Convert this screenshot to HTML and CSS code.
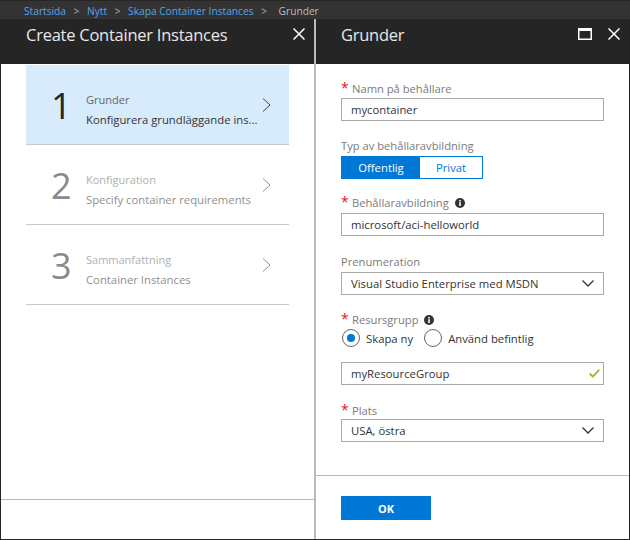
FILE: index.html
```html
<!DOCTYPE html>
<html>
<head>
    <title>Grunder</title>
    <link rel="stylesheet" href="styles.css">
</head>
<body>
    <nav class="crumbs">
        <a class="crumb-link">Startsida</a><span class="crumb-sep">&gt;</span>
        <a class="crumb-link">Nytt</a><span class="crumb-sep">&gt;</span>
        <a class="crumb-link">Skapa Container Instances</a><span class="crumb-sep">&gt;</span>
        <span class="crumb-now">Grunder</span>
    </nav>
    <div class="blades">
        <section class="blade blade-left">
            <header class="blade-head">
                <h1 class="blade-title">Create Container Instances</h1>
                <div class="head-icons">
                    <svg class="head-icon" viewBox="0 0 12 12"><path d="M0.5 0.5L11.5 11.5M11.5 0.5L0.5 11.5"/></svg>
                </div>
            </header>
            <div class="steps">
                <div class="step step-active">
                    <div class="step-num">1</div>
                    <div class="step-text">
                        <div class="step-name">Grunder</div>
                        <div class="step-desc">Konfigurera grundläggande ins...</div>
                    </div>
                    <svg class="step-arrow" viewBox="0 0 9 14"><path d="M1 0.5L8 7L1 13.5"/></svg>
                </div>
                <div class="step">
                    <div class="step-num">2</div>
                    <div class="step-text">
                        <div class="step-name">Konfiguration</div>
                        <div class="step-desc">Specify container requirements</div>
                    </div>
                    <svg class="step-arrow" viewBox="0 0 9 14"><path d="M1 0.5L8 7L1 13.5"/></svg>
                </div>
                <div class="step">
                    <div class="step-num">3</div>
                    <div class="step-text">
                        <div class="step-name">Sammanfattning</div>
                        <div class="step-desc">Container Instances</div>
                    </div>
                    <svg class="step-arrow" viewBox="0 0 9 14"><path d="M1 0.5L8 7L1 13.5"/></svg>
                </div>
            </div>
            <div class="blade-foot blade-foot-left"></div>
        </section>

        <section class="blade blade-right">
            <header class="blade-head">
                <h1 class="blade-title">Grunder</h1>
                <div class="head-icons">
                    <svg class="head-icon head-max" viewBox="0 0 14 12"><path d="M0 0H14V12H0ZM1.5 3V10.5H12.5V3Z"/></svg>
                    <svg class="head-icon" viewBox="0 0 12 12"><path d="M0.5 0.5L11.5 11.5M11.5 0.5L0.5 11.5"/></svg>
                </div>
            </header>
            <form class="form">
                <div class="field field-first">
                    <div class="label"><span class="star">*</span>Namn på behållare</div>
                    <div class="box">mycontainer</div>
                </div>
                <div class="field field-type">
                    <div class="label label-plain">Typ av behållaravbildning</div>
                    <div class="toggle">
                        <div class="toggle-on">Offentlig</div>
                        <div class="toggle-off">Privat</div>
                    </div>
                </div>
                <div class="field field-image">
                    <div class="label"><span class="star">*</span>Behållaravbildning
                        <svg class="info" viewBox="0 0 10 10"><circle cx="5" cy="5" r="5"/><rect class="info-mark" x="4.2" y="4.2" width="1.6" height="3.8"/><rect class="info-mark" x="4.2" y="2" width="1.6" height="1.5"/></svg>
                    </div>
                    <div class="box">microsoft/aci-helloworld</div>
                </div>
                <div class="field field-sub">
                    <div class="label label-plain">Prenumeration</div>
                    <div class="box box-select">Visual Studio Enterprise med MSDN
                        <svg class="drop" viewBox="0 0 12 7"><path d="M0.5 0.5L6 6L11.5 0.5"/></svg>
                    </div>
                </div>
                <div class="field field-group">
                    <div class="label"><span class="star">*</span>Resursgrupp
                        <svg class="info" viewBox="0 0 10 10"><circle cx="5" cy="5" r="5"/><rect class="info-mark" x="4.2" y="4.2" width="1.6" height="3.8"/><rect class="info-mark" x="4.2" y="2" width="1.6" height="1.5"/></svg>
                    </div>
                    <div class="radios">
                        <span class="radio radio-on"></span><span class="radio-text">Skapa ny</span>
                        <span class="radio"></span><span class="radio-text">Använd befintlig</span>
                    </div>
                    <div class="box box-group">myResourceGroup
                        <svg class="check" viewBox="0 0 11 9"><path d="M0.7 4.6L3.8 7.6L10.3 0.8"/></svg>
                    </div>
                </div>
                <div class="field field-place">
                    <div class="label"><span class="star">*</span>Plats</div>
                    <div class="box box-select">USA, östra
                        <svg class="drop" viewBox="0 0 12 7"><path d="M0.5 0.5L6 6L11.5 0.5"/></svg>
                    </div>
                </div>
            </form>
            <div class="blade-foot blade-foot-right">
                <button class="ok" type="button">OK</button>
            </div>
        </section>
    </div>
</body>
</html>
```

FILE: styles.css
```css
html, body {
    margin: 0;
    padding: 0;
}
body {
    width: 630px;
    height: 540px;
    overflow: hidden;
    background-color: #252525;
    font-family: "Open Sans", "Noto Sans", sans-serif;
    font-size: 12px;
    display: flex;
    flex-direction: column;
}
.crumbs {
    height: 19px;
    box-sizing: border-box;
    border-top: 1px solid #262626;
    padding-top: 1px;
    background-color: #333;
    display: flex;
    align-items: center;
    padding-left: 24px;
    font-size: 10.2px;
    white-space: nowrap;
}
.crumb-link {
    color: #4fa6ee;
}
.crumb-now {
    color: #bdbdbd;
    margin-left: 4px;
}
.crumb-sep {
    color: #b5b5b5;
    width: 21px;
    text-align: center;
}
.blades {
    flex: 1;
    display: flex;
    padding: 0 1px 1px 1px;
    min-height: 0;
}
.blade {
    background-color: #fff;
    display: flex;
    flex-direction: column;
}
.blade-left {
    width: 313px;
    border-right: 2px solid #bababa;
}
.blade-right {
    flex: 1;
}
.blade-head {
    height: 45px;
    background-color: #252525;
    display: flex;
    justify-content: space-between;
    padding-top: 5px;
    box-sizing: border-box;
}
.blade-left .blade-head {
    padding-left: 25px;
    padding-right: 9px;
}
.blade-right .blade-head {
    padding-left: 25px;
    padding-right: 9px;
}
.blade-title {
    margin: 0;
    font-size: 16.5px;
    letter-spacing: -0.25px;
    line-height: 22px;
    font-weight: 400;
    color: #e8e8e8;
}
.head-icons {
    display: flex;
    gap: 16px;
    padding-top: 4px;
}
.head-icon {
    width: 12px;
    height: 12px;
    fill: none;
    stroke: #fff;
    stroke-width: 1.5;
}
.head-max {
    width: 14px;
    fill: #fff;
    stroke: none;
}
.steps {
    flex: 1;
    padding: 1px 25px 0 25px;
    background-color: #fff;
}
.step {
    height: 79px;
    border-bottom: 1px solid #c8c8c8;
    display: flex;
    align-items: center;
    color: #8a8a8a;
}
.step-active {
    background-color: #d7ebfc;
    color: #252525;
}
.step-num {
    width: 60px;
    padding-left: 25px;
    padding-top: 3px;
    box-sizing: border-box;
    font-size: 36px;
    line-height: 40px;
}
.step-text {
    flex: 1;
    padding-top: 10px;
    white-space: nowrap;
    font-size: 11.3px;
    line-height: 20px;
    color: #8f8f8f;
}
.step-name {
    font-size: 11px;
    color: #b0b0b0;
}
.step-active .step-text {
    color: #333;
}
.step-active .step-name {
    color: #666;
}
.step-arrow {
    width: 9px;
    height: 14px;
    margin-right: 18px;
    fill: none;
    stroke: #8f8f8f;
    stroke-width: 1;
}
.step-active .step-arrow {
    stroke: #444;
}
.blade-foot-left {
    height: 39px;
    border-top: 1px solid #bababa;
}
.form {
    flex: 1;
    padding: 0 25px;
}
.label {
    position: relative;
    height: 16px;
    line-height: 16px;
    padding-left: 11px;
    font-size: 11.2px;
    color: #7a7a7a;
    white-space: nowrap;
}
.label-plain {
    padding-left: 0;
}
.star {
    position: absolute;
    left: 0;
    top: -1px;
    color: #e81123;
    font-size: 14px;
}
.info {
    width: 10px;
    height: 10px;
    margin-left: 3px;
    vertical-align: -1px;
    fill: #333;
}
.info-mark {
    fill: #fff;
}
.box {
    position: relative;
    height: 23px;
    box-sizing: border-box;
    border: 1px solid #a9a9a9;
    padding-left: 9px;
    line-height: 21px;
    font-size: 11.3px;
    color: #333;
    white-space: nowrap;
}
.field-first {
    padding-top: 17px;
}
.field-first .box {
    margin-top: 1px;
}
.field-type {
    padding-top: 17px;
}
.field-image {
    padding-top: 16px;
}
.field-sub {
    padding-top: 18px;
}
.field-group {
    padding-top: 17px;
}
.field-place {
    padding-top: 18px;
}
.field-type .toggle,
.field-image .box,
.field-sub .box {
    margin-top: 2px;
}
.toggle {
    width: 142px;
    height: 23px;
    box-sizing: border-box;
    border: 1px solid #0078d7;
    display: flex;
    line-height: 21px;
    font-size: 11.3px;
    text-align: center;
}
.toggle-on {
    width: 78px;
    background-color: #0078d7;
    color: #fff;
}
.toggle-off {
    flex: 1;
    color: #0078d7;
}
.radios {
    height: 20px;
    display: flex;
    align-items: center;
    padding-left: 1px;
    font-size: 11.3px;
    color: #333;
}
.radio {
    position: relative;
    width: 18px;
    height: 18px;
    box-sizing: border-box;
    border: 1px solid #666;
    border-radius: 50%;
}
.radio-on::after {
    content: "";
    position: absolute;
    left: 4px;
    top: 4px;
    width: 8px;
    height: 8px;
    border-radius: 50%;
    background-color: #0078d7;
}
.radio-text {
    margin-left: 6px;
    margin-right: 11px;
}
.box-group {
    margin-top: 14px;
}
.drop {
    position: absolute;
    right: 9px;
    top: 7px;
    width: 12px;
    height: 7px;
    fill: none;
    stroke: #333;
    stroke-width: 1.3;
}
.check {
    position: absolute;
    right: 3px;
    top: 6px;
    width: 11px;
    height: 9px;
    fill: none;
    stroke: #7fba00;
    stroke-width: 1.6;
}
.blade-foot-right {
    height: 64px;
    border-top: 1px solid #bababa;
    padding: 20px 25px 0 25px;
    box-sizing: border-box;
}
.ok {
    display: block;
    width: 90px;
    height: 24px;
    padding: 0;
    border: none;
    background-color: #0078d7;
    color: #fff;
    font-family: inherit;
    font-size: 11px;
    font-weight: 700;
}
```
